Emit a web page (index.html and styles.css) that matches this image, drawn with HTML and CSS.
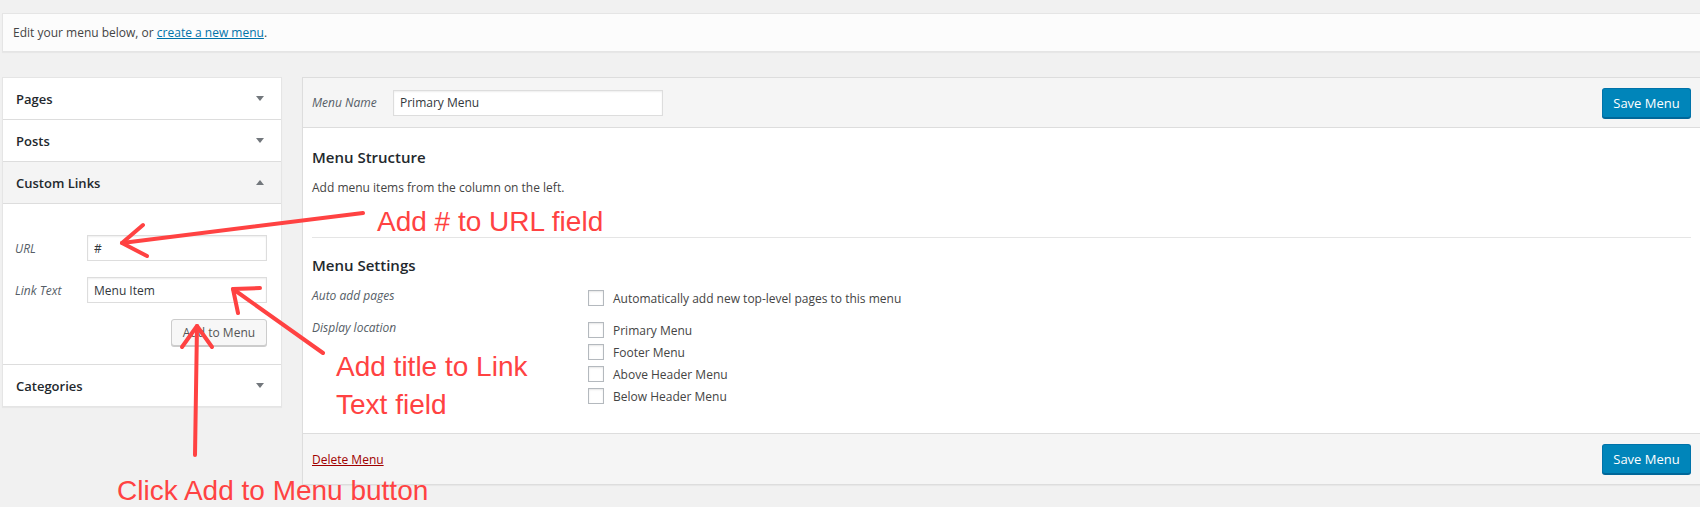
FILE: index.html
```html
<!DOCTYPE html>
<html>
<head>
<meta charset="utf-8">
<link rel="stylesheet" href="styles.css">
</head>
<body>
<div class="page">
  <div class="notice">
    <p>Edit your menu below, or <a href="#" class="link">create a new menu</a>.</p>
  </div>

  <div class="columns">
    <div class="sidebar">
      <div class="acc-section">
        <div class="acc-title">Pages <span class="tri down"></span></div>
      </div>
      <div class="acc-section">
        <div class="acc-title">Posts <span class="tri down"></span></div>
      </div>
      <div class="acc-section open">
        <div class="acc-title">Custom Links <span class="tri up"></span></div>
        <div class="acc-content">
          <div class="field-row">
            <span class="field-label">URL</span>
            <input class="text-input" type="text" value="#">
          </div>
          <div class="field-row">
            <span class="field-label">Link Text</span>
            <input class="text-input" type="text" value="Menu Item">
          </div>
          <div class="btn-row">
            <button class="button">Add to Menu</button>
          </div>
        </div>
      </div>
      <div class="acc-section last">
        <div class="acc-title">Categories <span class="tri down"></span></div>
      </div>
    </div>

    <div class="menu-panel">
      <div class="panel-header">
        <span class="name-label">Menu Name</span>
        <input class="text-input name-input" type="text" value="Primary Menu">
        <button class="button-primary">Save Menu</button>
      </div>
      <div class="panel-body">
        <h3 class="section-title">Menu Structure</h3>
        <p class="help">Add menu items from the column on the left.</p>
        <div class="divider"></div>
        <h3 class="section-title settings-title">Menu Settings</h3>
        <div class="settings">
          <div class="setting-row">
            <span class="setting-label">Auto add pages</span>
            <div class="checks">
              <label class="check"><span class="box"></span>Automatically add new top-level pages to this menu</label>
            </div>
          </div>
          <div class="setting-row">
            <span class="setting-label">Display location</span>
            <div class="checks">
              <label class="check"><span class="box"></span>Primary Menu</label>
              <label class="check"><span class="box"></span>Footer Menu</label>
              <label class="check"><span class="box"></span>Above Header Menu</label>
              <label class="check"><span class="box"></span>Below Header Menu</label>
            </div>
          </div>
        </div>
      </div>
      <div class="panel-footer">
        <a href="#" class="delete">Delete Menu</a>
        <button class="button-primary">Save Menu</button>
      </div>
    </div>
  </div>

  <svg class="arrows" width="1700" height="515" viewBox="0 0 1700 515">
    <g fill="none" stroke="#ff4242" stroke-width="4" stroke-linecap="round" stroke-linejoin="round">
      <path d="M363 213 L122 243"/>
      <path d="M143 225 L122 243 L147 256"/>
      <path d="M323 353 L233 289"/>
      <path d="M260 288 L233 289 L238 313"/>
      <path d="M195 455 L197 326"/>
      <path d="M182 347 L197 326 L212 347"/>
    </g>
  </svg>
  <div class="note note-url">Add # to URL field</div>
  <div class="note note-link">Add title to Link<br>Text field</div>
  <div class="note note-click">Click Add to Menu button</div>
</div>
</body>
</html>
```

FILE: styles.css
```css
html {
  background: #ffffff;
}
body {
  margin: 0;
  font-family: "Open Sans", "Noto Sans", sans-serif;
  font-size: 12px;
  color: #444444;
}
.page {
  position: relative;
  background: #f1f1f1;
  height: 507px;
  box-sizing: border-box;
  padding: 13px 0 0 2px;
  overflow: hidden;
}

/* notice */
.notice {
  background: #fcfcfc;
  border: 1px solid #e5e5e5;
  border-right: none;
  box-shadow: 0 1px 1px rgba(0,0,0,0.04);
  height: 37px;
  display: flex;
  align-items: center;
  padding-left: 10px;
}
.notice p {
  margin: 0;
  color: #444;
}
.link {
  color: #0073aa;
}

/* columns */
.columns {
  display: flex;
  align-items: flex-start;
  gap: 20px;
  margin-top: 25px;
}

/* sidebar */
.sidebar {
  width: 280px;
  flex: none;
  background: #fff;
  border: 1px solid #e5e5e5;
  box-sizing: border-box;
  box-shadow: 0 1px 1px rgba(0,0,0,0.04);
}
.acc-section {
  border-bottom: 1px solid #dddddd;
}
.acc-section.last {
  border-bottom: none;
}
.acc-title {
  height: 41px;
  display: flex;
  align-items: center;
  justify-content: space-between;
  padding: 0 17px 0 13px;
  font-size: 13px;
  font-weight: 600;
  color: #23282d;
}
.acc-section.open .acc-title {
  background: #f4f4f4;
  border-bottom: 1px solid #dddddd;
}
.tri {
  width: 0;
  height: 0;
  border-left: 4px solid transparent;
  border-right: 4px solid transparent;
}
.tri.down {
  border-top: 5px solid #72777c;
}
.tri.up {
  border-bottom: 5px solid #72777c;
}
.acc-content {
  padding: 31px 14px 18px 12px;
  display: flex;
  flex-direction: column;
  gap: 16px;
}
.field-row {
  display: flex;
  align-items: center;
}
.field-label {
  width: 72px;
  flex: none;
  font-style: italic;
  color: #555d66;
}
.text-input {
  flex: 1;
  height: 26px;
  box-sizing: border-box;
  border: 1px solid #dddddd;
  box-shadow: inset 0 1px 2px rgba(0,0,0,0.07);
  background: #fff;
  padding: 0 6px;
  font-family: "Open Sans", "Noto Sans", sans-serif;
  font-size: 12px;
  color: #32373c;
  margin: 0;
  outline: none;
}
.btn-row {
  display: flex;
  justify-content: flex-end;
}
.button {
  height: 27px;
  width: 96px;
  box-sizing: border-box;
  border: 1px solid #cccccc;
  border-radius: 3px;
  background: #f7f7f7;
  box-shadow: 0 1px 0 #cccccc;
  font-family: "Open Sans", "Noto Sans", sans-serif;
  font-size: 12px;
  color: #555555;
  padding: 0;
}

/* menu panel */
.menu-panel {
  flex: 1;
  background: #fff;
  border: 1px solid #dddddd;
  border-right: none;
  box-shadow: 0 1px 1px rgba(0,0,0,0.04);
}
.panel-header {
  height: 49px;
  background: #f5f5f5;
  border-bottom: 1px solid #dddddd;
  display: flex;
  align-items: center;
  padding: 0 9px 0 9px;
}
.name-label {
  width: 81px;
  flex: none;
  font-style: italic;
  color: #555d66;
}
.name-input {
  flex: none;
  width: 270px;
}
.button-primary {
  margin-left: auto;
  height: 30px;
  width: 89px;
  box-sizing: border-box;
  background: #0085ba;
  border: 1px solid #0073aa;
  border-bottom-color: #006799;
  border-radius: 3px;
  box-shadow: 0 1px 0 #006799;
  color: #ffffff;
  font-family: "Open Sans", "Noto Sans", sans-serif;
  font-size: 13px;
  padding: 0;
}
.panel-body {
  padding: 19px 9px 26px 9px;
}
.section-title {
  margin: 0;
  font-size: 15px;
  line-height: 20px;
  font-weight: 600;
  color: #23282d;
}
.help {
  margin: 12px 0 0 0;
  line-height: 18px;
  color: #444;
}
.divider {
  margin-top: 40px;
  border-top: 1px solid #e5e5e5;
}
.settings-title {
  margin-top: 17px;
}
.settings {
  margin-top: 12px;
  display: flex;
  flex-direction: column;
  gap: 10px;
}
.setting-row {
  display: flex;
  align-items: flex-start;
}
.setting-label {
  width: 276px;
  flex: none;
  font-style: italic;
  color: #555d66;
  line-height: 18px;
}
.checks {
  display: flex;
  flex-direction: column;
}
.check {
  display: flex;
  align-items: center;
  height: 22px;
  color: #444;
}
.box {
  width: 16px;
  height: 16px;
  box-sizing: border-box;
  border: 1px solid #b4b9be;
  background: #fff;
  box-shadow: inset 0 1px 2px rgba(0,0,0,0.1);
  margin-right: 9px;
  flex: none;
}
.panel-footer {
  height: 50px;
  background: #f5f5f5;
  border-top: 1px solid #dddddd;
  display: flex;
  align-items: center;
  padding: 0 9px 0 9px;
}
.delete {
  color: #a00000;
  text-decoration: underline;
}

/* annotations overlay */
.arrows {
  position: absolute;
  left: 0;
  top: 0;
  pointer-events: none;
}
.note {
  position: absolute;
  font-family: "Liberation Sans", Arial, sans-serif;
  font-size: 28px;
  line-height: 28px;
  color: #ff4242;
  white-space: nowrap;
}
.note-url {
  left: 377px;
  top: 208px;
}
.note-link {
  left: 336px;
  top: 348px;
  line-height: 38px;
}
.note-click {
  left: 117px;
  top: 477px;
}
```
